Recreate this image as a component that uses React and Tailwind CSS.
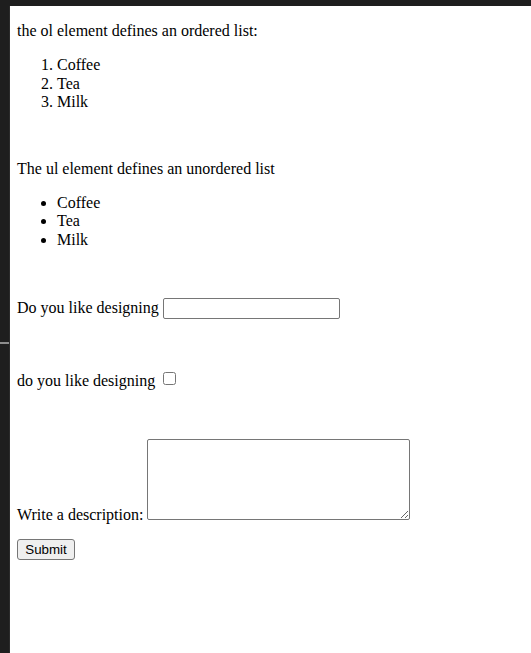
export default function App() {
  return (
    <div className="min-h-[653px] h-[653px] bg-[#1e1e1e] flex flex-col font-['Liberation_Serif',serif] text-black text-[16px] leading-[18.4px]">
      <div className="h-[6px] shrink-0" />
      <div className="flex flex-1">
        <div className="w-[9px] shrink-0 flex flex-col">
          <div className="mt-[336px] h-[2px] bg-[#8c8c8c]" />
        </div>
        <div className="flex-1 bg-white border-l border-[#2b2b2b] pt-[16px] pl-[7px]">
          <p>the ol element defines an ordered list:</p>
          <ol className="list-decimal pl-[40px] mt-[16px]">
            <li>Coffee</li>
            <li>Tea</li>
            <li>Milk</li>
          </ol>
          <p className="mt-[48px]">The ul element defines an unordered list</p>
          <ul className="list-disc pl-[40px] mt-[16px]">
            <li>Coffee</li>
            <li>Tea</li>
            <li>Milk</li>
          </ul>
          <form>
            <div className="mt-[49px]">
              <label>Do you like designing</label>{" "}
              <input
                type="text"
                className="w-[177px] h-[21px] border border-[#767676] rounded-[2px] px-[2px] bg-white font-['Liberation_Sans',sans-serif] text-[13.333px] leading-[normal] align-baseline"
              />
            </div>
            <div className="mt-[50px]">
              <label>do you like designing</label>{" "}
              <input type="checkbox" className="ml-[4px] mr-[3px] my-[3px] w-[13px] h-[13px] align-[1px]" />
            </div>
            <div className="mt-[48px]">
              <label>Write a description:</label>{" "}
              <textarea className="w-[263px] h-[81px] border border-[#767676] rounded-[2px] bg-white resize align-baseline font-['Liberation_Mono',monospace] text-[13.333px] leading-[normal]" />
            </div>
            <div className="mt-[15px]">
              <button
                type="button"
                className="w-[58px] h-[21px] bg-[#efefef] border border-[#767676] rounded-[3px] font-['Liberation_Sans',sans-serif] text-[13.333px] leading-[normal] text-black flex items-center justify-center"
              >
                Submit
              </button>
            </div>
          </form>
        </div>
      </div>
    </div>
  );
}
